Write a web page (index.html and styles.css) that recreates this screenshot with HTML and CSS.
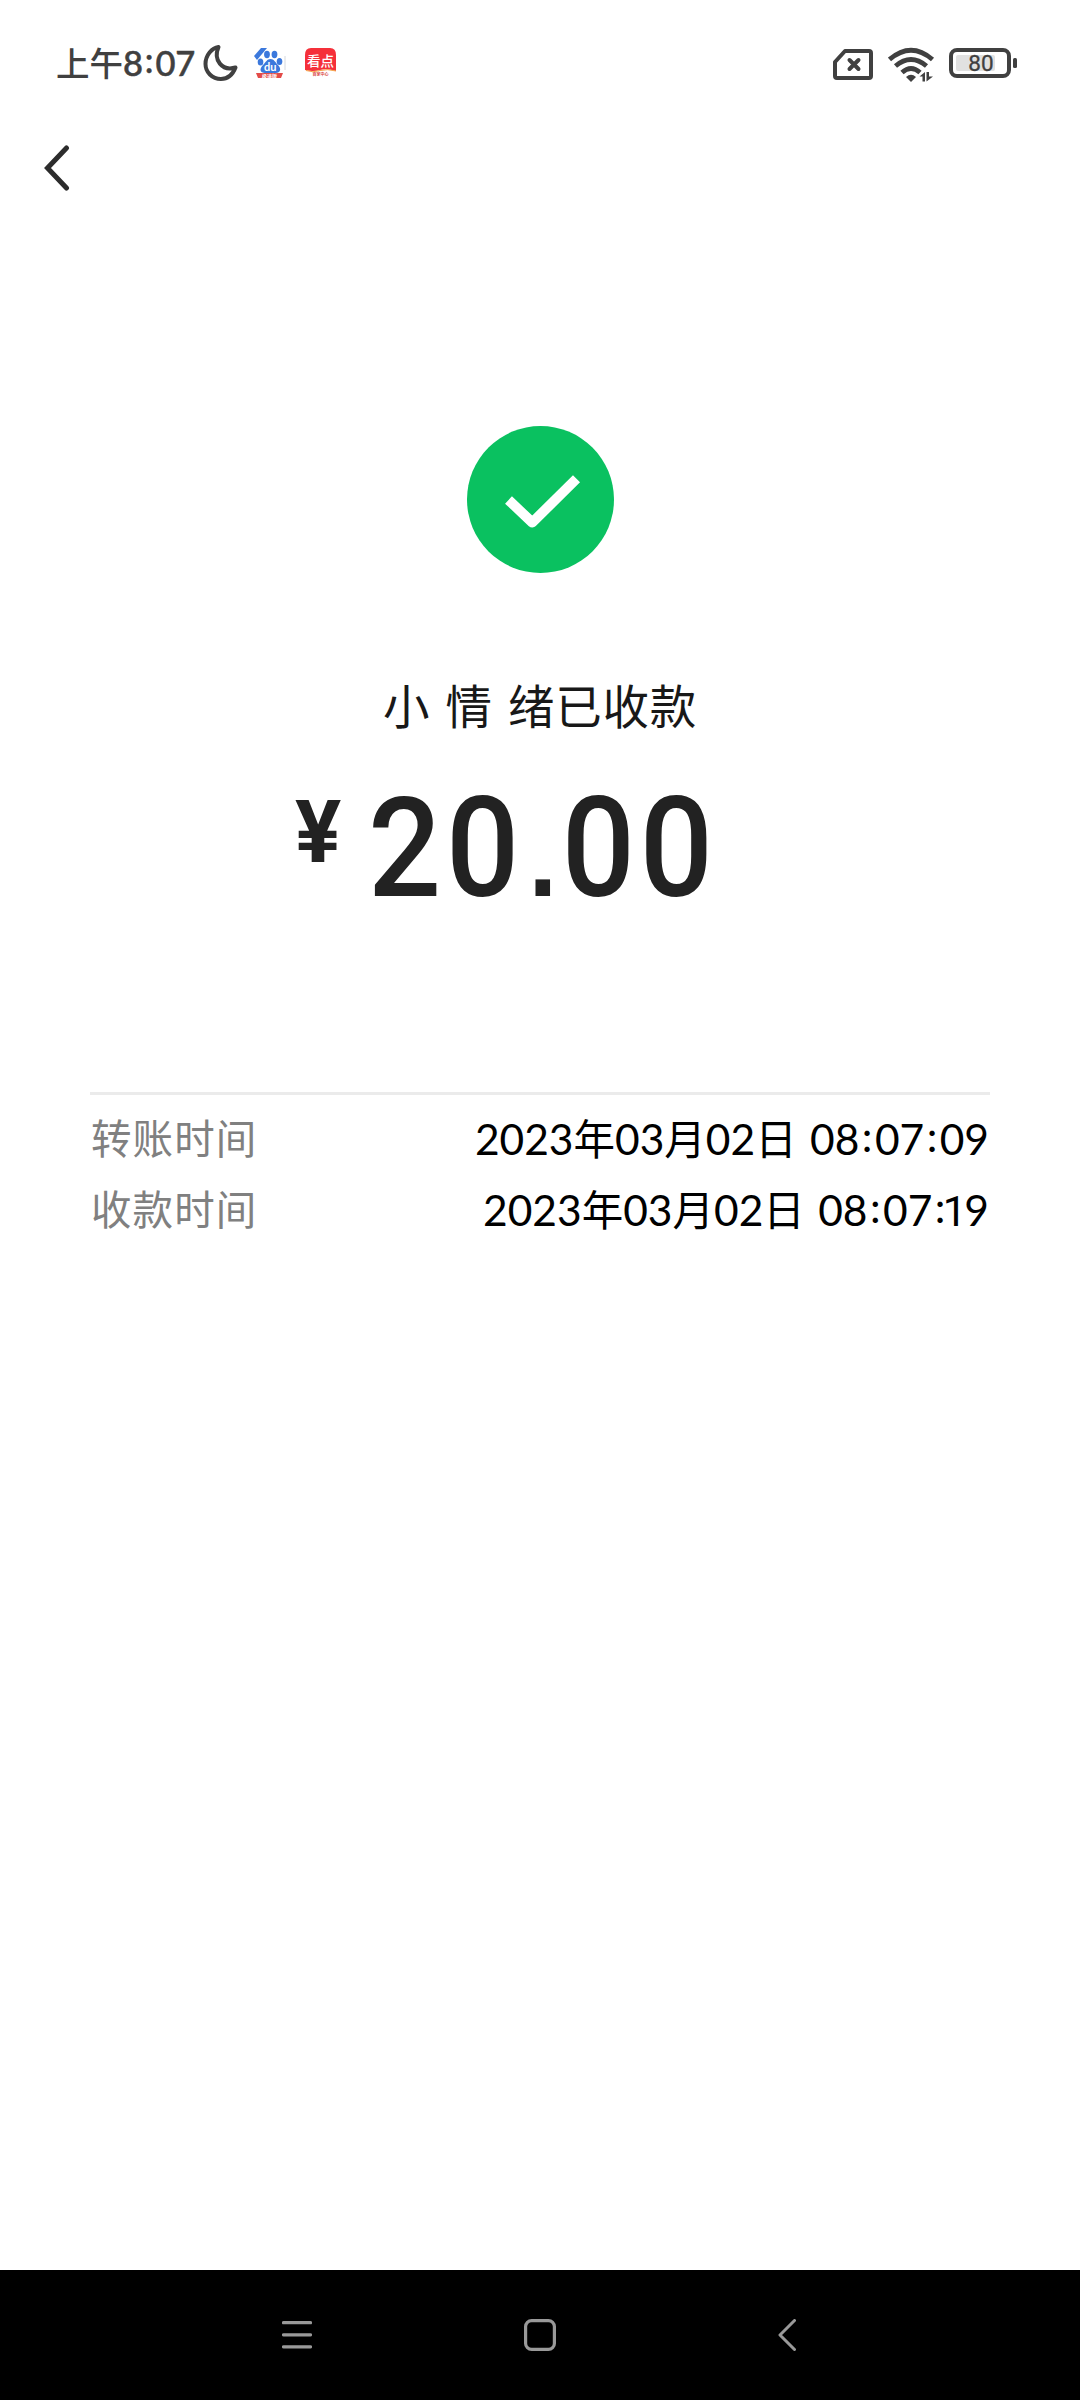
FILE: index.html
```html
<!DOCTYPE html>
<html lang="zh-CN">
<head>
<meta charset="utf-8">
<title>转账详情</title>
<link rel="stylesheet" href="styles.css">
</head>
<body>
<div class="screen">
  <header class="status">
    <span class="clock">上午<span class="digits">8<span class="colon">:</span>07</span></span>
    <svg class="moon" width="36" height="38" viewBox="0 0 36 38"><path d="M15.500 3C10 16 19 27.500 32.500 23.500C29 32.500 23 35 18 35C9 35 2.500 28 2.500 20C2.500 11 9 4 15.500 3Z" fill="none" stroke="#404040" stroke-width="4" stroke-linejoin="round"/></svg>
    <svg class="app app-paw" width="33" height="32" viewBox="0 0 33 32">
      <g fill="#3b78dc"><path d="M0 8L7 0H13L3 12Z"/><ellipse cx="13" cy="6.500" rx="2.900" ry="3.700"/><ellipse cx="20.500" cy="6.500" rx="2.900" ry="3.700"/><ellipse cx="6.500" cy="14" rx="2.800" ry="3.500"/><ellipse cx="25.500" cy="13.500" rx="2.800" ry="3.500"/><path d="M16.500 11C20 11 21 14 24 17C28 21 26 25 22 25H11C6 25 5 21 9 17C12 14 13 11 16.500 11Z"/></g>
      <path d="M2 25H29L27 30H4Z" fill="#e34b48"/><path d="M31 8V22" stroke="#c9ced6" stroke-width=".8"/>
      <text x="16.300" y="22.500" class="t-du">du</text><text x="15.500" y="29.800" class="t-ribbon">极速版</text>
    </svg>
    <svg class="app" width="32" height="32" viewBox="0 0 32 32">
      <path d="M6 0H25Q31 0 31 7V23Q22 20 15 22Q8 24 0 22V7Q0 0 6 0Z" fill="#f5303a"/><path d="M1 22.500Q8 25 15 22.600Q22 20.500 31 23" fill="none" stroke="#f6a54b" stroke-width="1"/>
      <text x="15.500" y="18" class="t-kan">看点</text><text x="15.500" y="28" class="t-sub">百家中心</text>
    </svg>
    <span class="spacer"></span>
    <svg class="sim" width="40" height="32" viewBox="0 0 40 32"><path d="M12 2H36Q38 2 38 4V27Q38 29 36 29H4Q2 29 2 27V13Z" fill="none" stroke="#404040" stroke-width="4" stroke-linejoin="round"/><path d="M16.500 11L25.500 20M25.500 11L16.500 20" stroke="#404040" stroke-width="4" stroke-linecap="round"/></svg>
    <svg class="wifi" width="48" height="36" viewBox="0 0 48 36"><g fill="none" stroke="#404040" stroke-width="4.800"><path d="M1.500 12.500Q23 -6 44.500 12.500"/><path d="M7.500 19Q23 6 38.500 19"/><path d="M14 25.500Q23 17.500 32 25.500"/></g><path d="M18 30Q23 25.500 28 30L23 35Z" fill="#404040"/><path d="M31.500 29.500L37 25V34.500H34.500V29.500ZM38.500 25H41V29.500H45L38.500 34.500Z" fill="#404040"/></svg>
    <svg class="battery" width="68" height="30" viewBox="0 0 68 30"><rect x="7" y="7" width="39" height="16" rx="2" fill="#e1e1e1"/><rect x="2" y="2" width="58" height="26" rx="6" fill="none" stroke="#404040" stroke-width="4"/><rect x="64" y="10" width="4" height="10" rx="1.500" fill="#404040"/><text x="32" y="23.400" class="t-level">80</text></svg>
  </header>

  <nav class="topbar">
    <svg width="26" height="46" viewBox="0 0 26 46"><path d="M22.500 3L3.500 23L22.500 43" fill="none" stroke="#2c2c2c" stroke-width="5" stroke-linecap="round"/></svg>
  </nav>

  <main class="content">
    <svg class="check" width="147" height="147" viewBox="0 0 147 147"><circle cx="73.500" cy="73.500" r="73.500" fill="#0ac160"/><path d="M41.500 74L65.300 96.500L109.500 52.700" fill="none" stroke="#fff" stroke-width="10" stroke-linejoin="round"/></svg>
    <h1 class="title">小 情 绪已收款</h1>
    <p class="amount"><span class="yen">¥</span><span class="number">20<span class="point">.</span>00</span></p>
    <dl class="details">
      <div class="row"><dt>转账时间</dt><dd>2023<span class="han">年</span>03<span class="han">月</span>02<span class="han">日</span> 08<span class="colon">:</span>07<span class="colon">:</span>09</dd></div>
      <div class="row"><dt>收款时间</dt><dd>2023<span class="han">年</span>03<span class="han">月</span>02<span class="han">日</span> 08<span class="colon">:</span>07<span class="colon">:</span><span class="one">1</span>9</dd></div>
    </dl>
  </main>

  <footer class="navbar">
    <svg class="menu" width="30" height="32" viewBox="0 0 30 32"><path d="M1.500 3.700H28.500M1.500 15.800H28.500M1.500 27.800H28.500" stroke="#999" stroke-width="3.200" stroke-linecap="round"/></svg>
    <svg class="home" width="32" height="32" viewBox="0 0 32 32"><rect x="1.600" y="1.600" width="28.800" height="28.800" rx="6" fill="none" stroke="#999" stroke-width="3.200"/></svg>
    <svg class="back" width="18" height="32" viewBox="0 0 18 32"><path d="M16.500 1.500L2 16L16.500 30.500" fill="none" stroke="#999" stroke-width="3" stroke-linecap="round" stroke-linejoin="round"/></svg>
  </footer>
</div>
</body>
</html>
```
FILE: styles.css
```css
* { box-sizing: border-box; margin: 0; padding: 0; }
body { background: #fff; font-family: Lato, "Noto Sans CJK SC", sans-serif; }
svg { display: block; flex: none; }
.screen { width: 1080px; height: 2400px; display: flex; flex-direction: column; }

.status { height: 126px; padding: 0 63px 0 56px; display: flex; align-items: flex-start; color: #404040; }
.clock { width: 147px; margin-top: 38px; font-size: 33.5px; line-height: 50px; font-weight: 500; white-space: nowrap; }
.digits { font-size: 34.5px; letter-spacing: -0.2px; -webkit-text-stroke: 0.5px #404040; }
.colon { position: relative; top: -0.08em; display: inline-block; width: 0.365em; line-height: 1; text-align: center; }
.moon { margin-top: 44px; }
.app { margin: 48px 0 0 18px; }
.app-paw { margin-left: 15px; }
.spacer { flex: 1; }
.sim { margin-top: 49px; }
.wifi { margin: 47px 13px 0 15px; }
.battery { margin-top: 48px; }
.t-du, .t-ribbon, .t-kan, .t-sub { text-anchor: middle; fill: #fff; font-weight: 700; }
.t-du { font-size: 11px; }
.t-ribbon { font-size: 5px; }
.t-kan { font-size: 13.5px; font-weight: 500; }
.t-sub { font-size: 4px; fill: #d94440; }
.t-level { text-anchor: middle; font: 400 22.5px Roboto, sans-serif; fill: #404040; stroke: #404040; stroke-width: 0.3px; }

.topbar { height: 160px; padding: 19px 0 0 44px; }

.content { flex: 1; display: flex; flex-direction: column; align-items: center; padding-top: 140px; }
.title { margin-top: 96px; height: 70px; font: 400 46.5px/70px "Noto Sans CJK SC", sans-serif; letter-spacing: 0.7px; word-spacing: 4.2px; color: #181818; white-space: pre; }
.amount { align-self: stretch; display: flex; align-items: flex-start; height: 353px; padding: 39px 0 0 295px; font-family: Roboto, sans-serif; color: #222; }
.yen { width: 73px; font-size: 88px; line-height: 107px; font-weight: 700; transform: scaleX(0.98); transform-origin: left; }
.number { font-size: 140px; line-height: 140px; font-weight: 500; letter-spacing: 5.1px; transform: scaleX(0.92); transform-origin: left; white-space: nowrap; }
.point { display: inline-block; width: 41.3px; margin-left: -5.3px; padding-left: 5.3px; box-sizing: content-box; font: 700 112px/1 "Liberation Sans", sans-serif; letter-spacing: 0; text-align: center; }
.details { width: 900px; border-top: 3px solid #ebebeb; padding-top: 8px; }
.row { height: 71px; display: flex; justify-content: space-between; line-height: 71px; white-space: nowrap; }
dt { padding-left: 1px; font-size: 40.5px; letter-spacing: 1.1px; color: #808080; }
dd { padding-right: 1px; font-size: 42.5px; letter-spacing: 0; word-spacing: 2.5px; color: #000; }
.han { font-size: 41.5px; }
.one { display: inline-block; width: 16.5px; font-family: Roboto, sans-serif; line-height: 1; text-indent: -5px; }

.navbar { height: 130px; background: #000; display: flex; align-items: flex-start; padding: 49px 0 0 282px; }
.home { margin: 0 222px 0 212px; }
```
